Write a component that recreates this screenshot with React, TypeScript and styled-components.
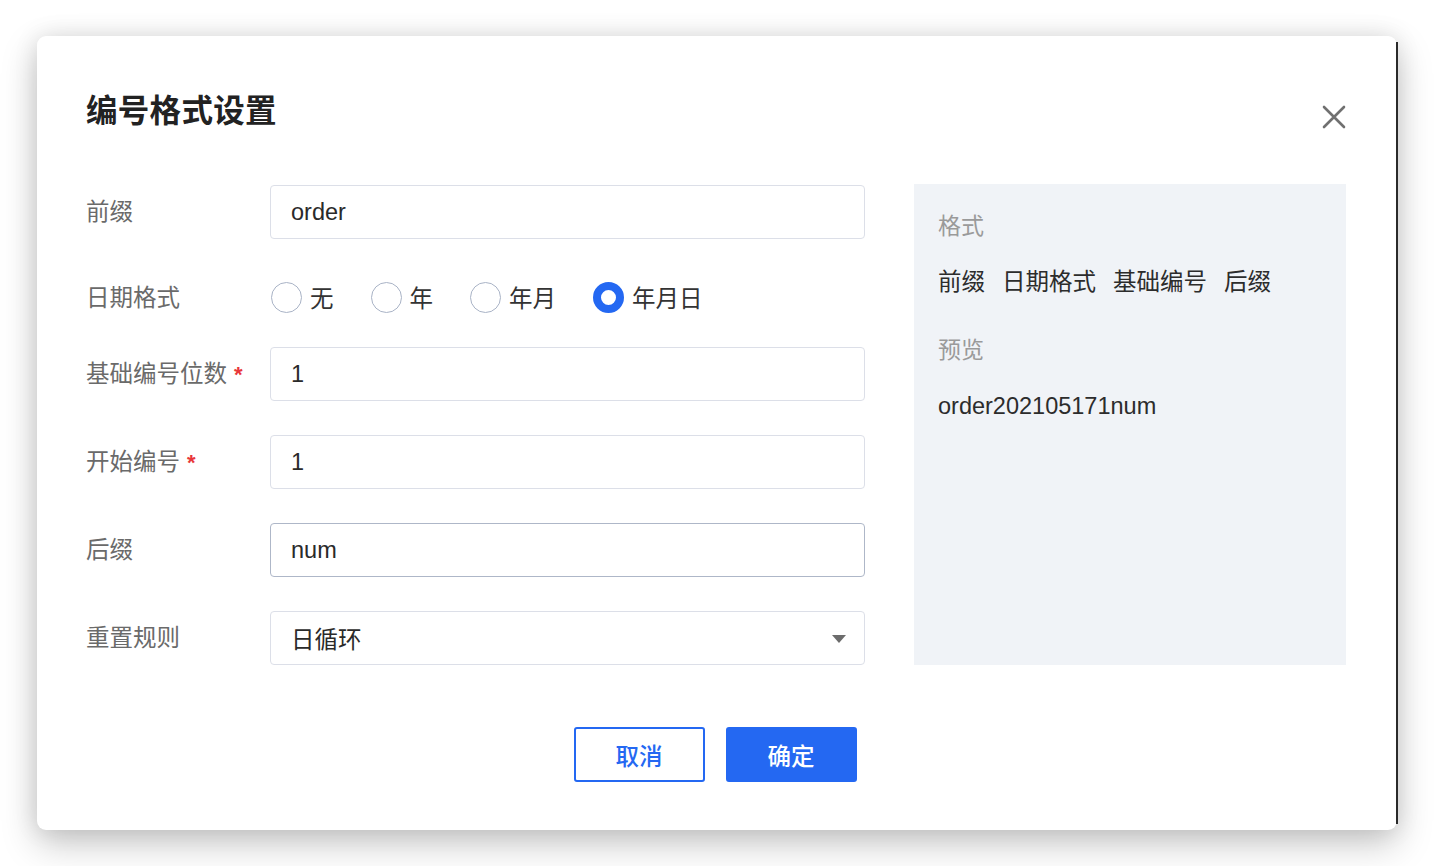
import React from "react";
import styled, { createGlobalStyle } from "styled-components";

const Global = createGlobalStyle`
  html, body { margin: 0; padding: 0; background: #ffffff; }
  body { font-family: "Liberation Sans", "Noto Sans CJK SC", sans-serif; }
  * { box-sizing: border-box; }
`;

const Page = styled.div`
  width: 1434px;
  height: 866px;
  padding: 36px 0 0 37px;
  background: #fff;
`;

const Modal = styled.div`
  position: relative;
  width: 1360px;
  height: 794px;
  background: #fff;
  border-radius: 9px;
  box-shadow: 0 14px 36px rgba(0, 0, 0, 0.22), 0 0 24px rgba(0, 0, 0, 0.1);
  padding: 0 51px 0 49px;
  display: flex;
  flex-direction: column;
  &::after {
    content: "";
    position: absolute;
    right: -1px;
    top: 6px;
    bottom: 6px;
    width: 2px;
    background: #2a2a2a;
  }
`;

const Header = styled.div`
  height: 148px;
  display: flex;
  align-items: flex-start;
  justify-content: space-between;
`;

const Title = styled.h2`
  margin: 57px 0 0 0;
  font-size: 31.5px;
  line-height: 36px;
  font-weight: 700;
  color: #222;
  letter-spacing: 0.3px;
`;

const CloseButton = styled.button`
  margin-top: 68px;
  margin-right: -1px;
  width: 26px;
  height: 26px;
  padding: 0;
  border: none;
  background: transparent;
  display: flex;
  align-items: center;
  justify-content: center;
  cursor: pointer;
`;

const Body = styled.div`
  display: flex;
  gap: 49px;
  align-items: flex-start;
`;

const Form = styled.div`
  width: 779px;
  display: flex;
  flex-direction: column;
  gap: 34px;
  padding-top: 1px;
`;

const Row = styled.div<{ $h?: number; $pt?: number }>`
  display: flex;
  align-items: center;
  height: ${(p) => p.$h ?? 54}px;
  padding-top: ${(p) => p.$pt ?? 0}px;
`;

const Label = styled.div`
  width: 184px;
  flex-shrink: 0;
  font-size: 23.5px;
  line-height: 30px;
  color: #6a6a6a;
  display: flex;
  align-items: center;
`;

const Required = styled.span`
  color: #e8363a;
  margin-left: 7px;
  font-size: 22px;
  font-weight: 700;
  margin-top: 2px;
`;

const Input = styled.div<{ $active?: boolean }>`
  flex: 1;
  height: 54px;
  border: 1.5px solid ${(p) => (p.$active ? "#aeb7c8" : "#dcdfe8")};
  border-radius: 4px;
  padding: 0 20px;
  display: flex;
  align-items: center;
  justify-content: space-between;
  font-size: 23.5px;
  color: #2a2a2a;
  background: #fff;
`;

const Caret = styled.span`
  width: 0;
  height: 0;
  border-left: 7px solid transparent;
  border-right: 7px solid transparent;
  border-top: 8px solid #6c6c6c;
  margin-right: -2px;
  margin-top: 2px;
`;

const RadioGroup = styled.div`
  display: flex;
  align-items: center;
  gap: 37px;
  margin-left: 1px;
  margin-top: -2px;
`;

const RadioItem = styled.label`
  display: flex;
  align-items: center;
  gap: 8px;
  font-size: 23.5px;
  color: #333;
`;

const RadioCircle = styled.span<{ $checked?: boolean }>`
  width: 31px;
  height: 31px;
  border-radius: 50%;
  border: ${(p) => (p.$checked ? "8px solid #2468f2" : "1.5px solid #a9b3c6")};
  background: #fff;
  display: inline-block;
`;

const Panel = styled.div`
  width: 432px;
  height: 481px;
  background: #f0f3f7;
  padding: 24px 24px;
  display: flex;
  flex-direction: column;
`;

const PanelLabel = styled.div<{ $mt?: number }>`
  font-size: 23px;
  line-height: 32px;
  color: #9a9a9a;
  margin-top: ${(p) => p.$mt ?? 0}px;
`;

const PanelValue = styled.div<{ $mt?: number }>`
  font-size: 23.5px;
  line-height: 32px;
  color: #2c2c2c;
  margin-top: ${(p) => p.$mt ?? 0}px;
  display: flex;
  gap: 17px;
`;

const Footer = styled.div`
  display: flex;
  justify-content: center;
  gap: 21px;
  margin-top: 62px;
  padding-right: 2px;
`;

const Button = styled.button<{ $primary?: boolean }>`
  width: 131px;
  height: 55px;
  border-radius: 3px;
  font-family: "Liberation Sans", "Noto Sans CJK SC", sans-serif;
  font-size: 23.5px;
  font-weight: 500;
  border: 2px solid #2468f2;
  background: ${(p) => (p.$primary ? "#2468f2" : "#fff")};
  color: ${(p) => (p.$primary ? "#fff" : "#2468f2")};
  cursor: pointer;
`;

const radios = [
  { label: "无", checked: false },
  { label: "年", checked: false },
  { label: "年月", checked: false },
  { label: "年月日", checked: true },
];

export default function App() {
  return (
    <>
      <Global />
      <Page>
        <Modal>
          <Header>
            <Title>编号格式设置</Title>
            <CloseButton aria-label="关闭">
              <svg width="24" height="24" viewBox="0 0 24 24">
                <path
                  d="M2 2 L22 22 M22 2 L2 22"
                  stroke="#707070"
                  strokeWidth="2.6"
                  strokeLinecap="round"
                />
              </svg>
            </CloseButton>
          </Header>
          <Body>
            <Form>
              <Row>
                <Label>前缀</Label>
                <Input>order</Input>
              </Row>
              <Row $h={40} $pt={10}>
                <Label>日期格式</Label>
                <RadioGroup>
                  {radios.map((r) => (
                    <RadioItem key={r.label}>
                      <RadioCircle $checked={r.checked} />
                      {r.label}
                    </RadioItem>
                  ))}
                </RadioGroup>
              </Row>
              <Row>
                <Label>
                  基础编号位数<Required>*</Required>
                </Label>
                <Input>1</Input>
              </Row>
              <Row>
                <Label>
                  开始编号<Required>*</Required>
                </Label>
                <Input>1</Input>
              </Row>
              <Row>
                <Label>后缀</Label>
                <Input $active>num</Input>
              </Row>
              <Row>
                <Label>重置规则</Label>
                <Input>
                  日循环
                  <Caret />
                </Input>
              </Row>
            </Form>
            <Panel>
              <PanelLabel $mt={2}>格式</PanelLabel>
              <PanelValue $mt={24}>
                <span>前缀</span>
                <span>日期格式</span>
                <span>基础编号</span>
                <span>后缀</span>
              </PanelValue>
              <PanelLabel $mt={36}>预览</PanelLabel>
              <PanelValue $mt={24}>order202105171num</PanelValue>
            </Panel>
          </Body>
          <Footer>
            <Button>取消</Button>
            <Button $primary>确定</Button>
          </Footer>
        </Modal>
      </Page>
    </>
  );
}
